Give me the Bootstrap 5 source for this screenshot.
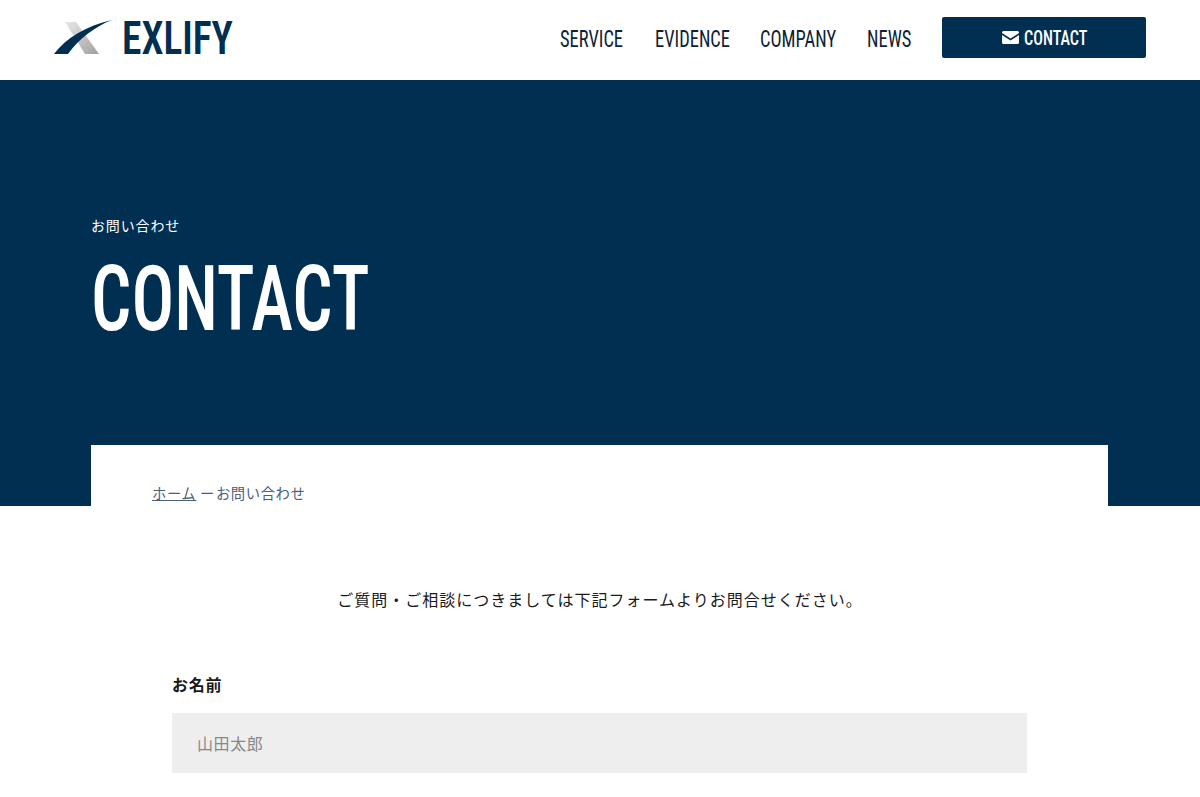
<!DOCTYPE html>
<html lang="ja">
<head>
    <meta charset="UTF-8">
    <title>お問い合わせ | EXLIFY</title>
    <link href="https://cdn.jsdelivr.net/npm/bootstrap@5.3.0/dist/css/bootstrap.min.css" rel="stylesheet">
    <style>
        body { font-family: "Noto Sans CJK JP", "Noto Sans", sans-serif; color: #1a1a1a; overflow-x: hidden; }
        /* no Oswald here: condensed Roboto narrowed a bit more gets the same widths */
        .cond { font-family: "Roboto", "Open Sans", sans-serif; font-stretch: 75%; white-space: nowrap; }
        .squeeze { display: inline-block; transform: scaleX(.77); transform-origin: 0 50%; }
        .site-head { height: 80px; padding: 0 54px 6px 54px; }
        .logo-box { gap: 10px; }
        .logo-word { width: 110px; font-size: 47px; font-weight: 600; color: #002f52; line-height: 1; transform: scaleX(.84); }
        .head-nav { gap: 31px; }
        .head-link { font-size: 24px; font-weight: 400; color: #0f2233; text-decoration: none; padding-top: 3px; }
        .wd-service { width: 64px; }
        .wd-evidence { width: 74px; }
        .wd-company { width: 76px; }
        .wd-news { width: 44px; }
        .head-btn { width: 204px; height: 41px; background: #002f52; color: #fff; border-radius: 2px; font-size: 21px; font-weight: 500; text-decoration: none; gap: 5px; }
        .btn-word { width: 63px; padding-top: 4px; }
        .hero { height: 426px; background: #002f52; color: #fff; padding: 135px 0 0 91px; }
        .hero-sub { font-size: 14px; line-height: 20px; letter-spacing: .85px; }
        .hero-title { font-size: 91px; line-height: 1; margin: 19px 0 0; font-weight: 500; transform: scaleX(.78); transform-origin: 0 50%; }
        .crumb-box { width: 1017px; height: 61px; margin: -61px auto 0 91px; background: #fff; padding: 38px 61px 0; font-size: 14.3px; line-height: 20px; letter-spacing: .6px; color: #4a6075; }
        .crumb-box a { color: #4a6075; }
        .crumb-here { margin-left: 1px; }
        .lead-note { font-size: 16px; line-height: 24px; letter-spacing: 1px; margin: 81px 0 0; }
        .form-area { width: 855px; margin: 61px auto 0 172px; }
        .field-label { font-size: 16px; font-weight: 700; line-height: 24px; letter-spacing: .8px; margin-bottom: 17px; }
        .field-input { height: 60px; background: #eee; border: 0; border-radius: 0; padding: 0 25px; font-size: 16px; letter-spacing: .6px; }
        .field-input::placeholder { color: #888; }
    </style>
</head>
<body>
    <header class="site-head d-flex align-items-center justify-content-between bg-white">
        <a href="#" class="logo-box d-flex align-items-center text-decoration-none">
            <svg width="58" height="36" viewBox="0 0 58 36">
                <defs>
                    <linearGradient id="logoGrey" x1="0" y1="0" x2="1" y2="1">
                        <stop offset="0" stop-color="#e8e8e8"/>
                        <stop offset="1" stop-color="#a0a0a0"/>
                    </linearGradient>
                </defs>
                <path d="M11 3H22L45 35H31Z" fill="url(#logoGrey)"/>
                <path d="M0 35C12 19 32 7 58 1C40 8 25 20 14 35Z" fill="#002f52"/>
            </svg>
            <span class="logo-word cond squeeze">EXLIFY</span>
        </a>
        <nav class="head-nav d-flex align-items-center cond">
            <a href="#" class="head-link squeeze wd-service">SERVICE</a>
            <a href="#" class="head-link squeeze wd-evidence">EVIDENCE</a>
            <a href="#" class="head-link squeeze wd-company">COMPANY</a>
            <a href="#" class="head-link squeeze wd-news">NEWS</a>
            <a href="#" class="head-btn d-flex align-items-center justify-content-center">
                <svg width="17" height="13" viewBox="0 0 17 13"><path d="M1.5 0H15.5A1.5 1.5 0 0 1 17 1.5V2L8.5 7.5 0 2V1.5A1.5 1.5 0 0 1 1.5 0ZM0 4L8.5 9.5 17 4V11.5A1.5 1.5 0 0 1 15.5 13H1.5A1.5 1.5 0 0 1 0 11.5Z" fill="#fff"/></svg>
                <span class="squeeze btn-word">CONTACT</span>
            </a>
        </nav>
    </header>

    <section class="hero">
        <div class="hero-sub">お問い合わせ</div>
        <h1 class="hero-title cond">CONTACT</h1>
    </section>

    <div class="crumb-box"><a href="#">ホーム</a> ー<span class="crumb-here">お問い合わせ</span></div>

    <main>
        <p class="lead-note text-center">ご質問・ご相談につきましては下記フォームよりお問合せください。</p>
        <form class="form-area">
            <label class="field-label d-block" for="name">お名前</label>
            <input id="name" class="form-control field-input" type="text" placeholder="山田太郎">
        </form>
    </main>

    <script src="https://cdn.jsdelivr.net/npm/bootstrap@5.3.0/dist/js/bootstrap.bundle.min.js"></script>
</body>
</html>
